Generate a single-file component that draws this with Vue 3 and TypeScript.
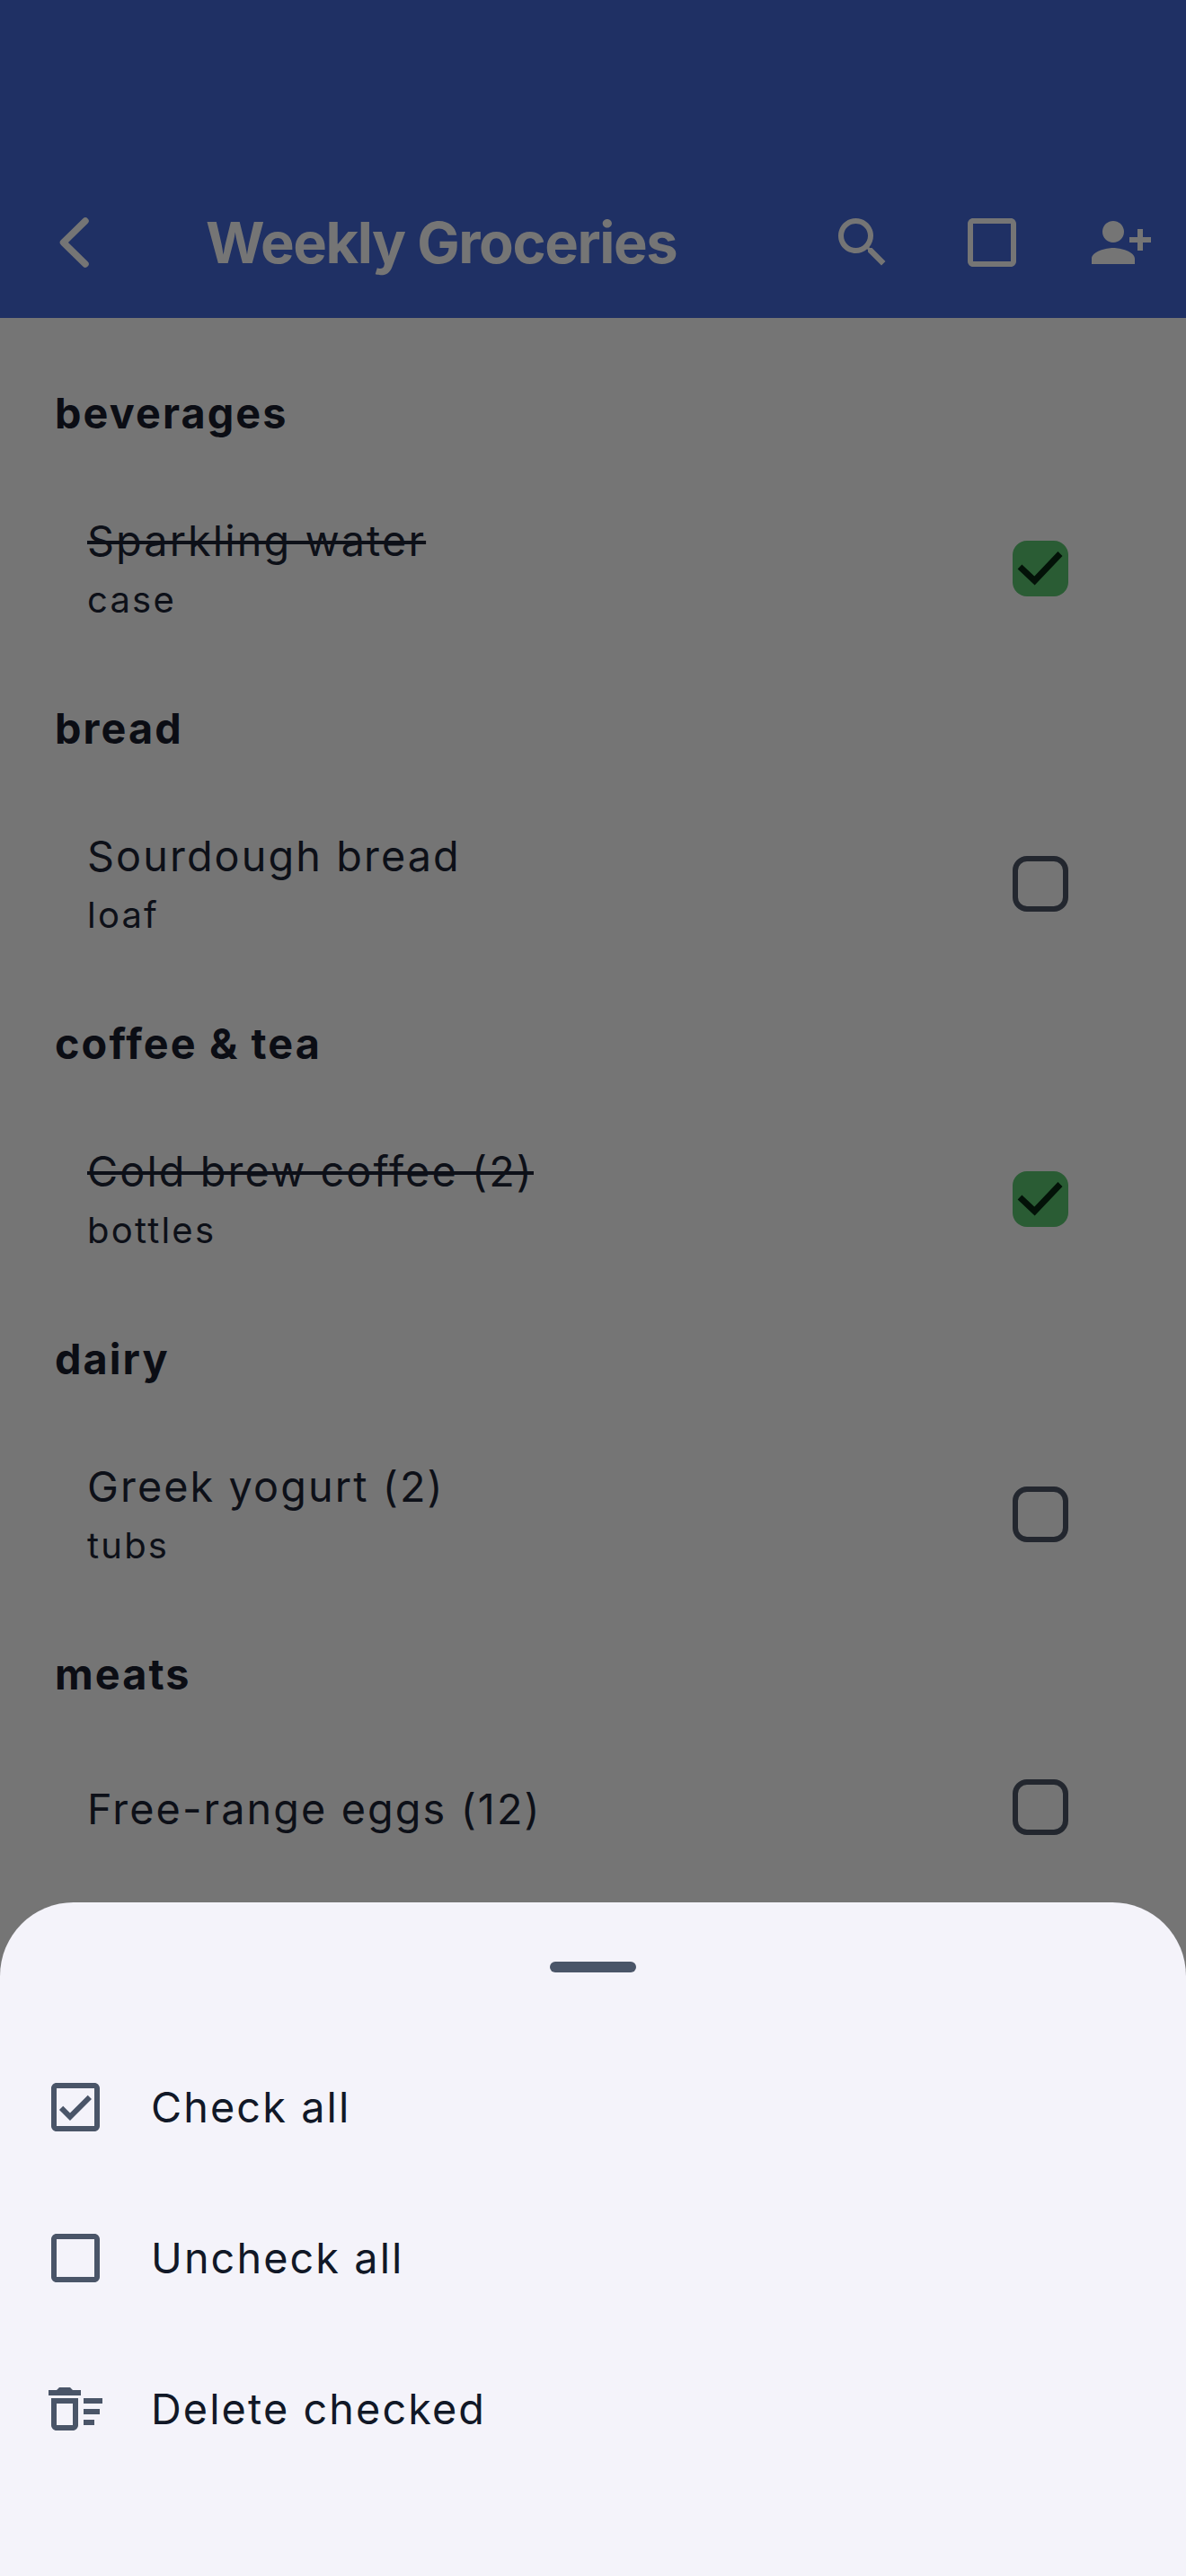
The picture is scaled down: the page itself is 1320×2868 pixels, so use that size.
<script setup lang="ts">
interface Item {
  name: string
  unit?: string
  done: boolean
}

interface Section {
  title: string
  items: Item[]
}

const sections: Section[] = [
  { title: 'beverages', items: [{ name: 'Sparkling water', unit: 'case', done: true }] },
  { title: 'bread', items: [{ name: 'Sourdough bread', unit: 'loaf', done: false }] },
  { title: 'coffee & tea', items: [{ name: 'Cold brew coffee (2)', unit: 'bottles', done: true }] },
  { title: 'dairy', items: [{ name: 'Greek yogurt (2)', unit: 'tubs', done: false }] },
  { title: 'meats', items: [{ name: 'Free-range eggs (12)', done: false }] },
]
</script>

<template>
  <div class="screen">
    <header class="topbar">
      <button class="back">
        <svg width="72" height="72" viewBox="0 0 72 72" fill="none" stroke="currentColor" stroke-width="7.500" stroke-linecap="round" stroke-linejoin="round">
          <path d="M35 12 L10.500 36 L35 60" />
        </svg>
      </button>
      <h1 class="title">Weekly Groceries</h1>
      <div class="actions">
        <svg width="72" height="72" viewBox="0 0 24 24" fill="currentColor">
          <path d="M15.5 14h-.79l-.28-.27C15.41 12.59 16 11.11 16 9.5 16 5.91 13.09 3 9.5 3S3 5.91 3 9.5 5.91 16 9.5 16c1.61 0 3.09-.59 4.23-1.57l.27.28v.79l5 4.99L20.49 19l-4.99-5zm-6 0C7.01 14 5 11.99 5 9.5S7.01 5 9.5 5 14 7.01 14 9.5 11.99 14 9.5 14z" />
        </svg>
        <svg width="72" height="72" viewBox="0 0 24 24" fill="currentColor">
          <path d="M19 5v14H5V5h14m0-2H5c-1.1 0-2 .9-2 2v14c0 1.1.9 2 2 2h14c1.1 0 2-.9 2-2V5c0-1.1-.9-2-2-2z" />
        </svg>
        <svg class="mirror" width="72" height="72" viewBox="0 0 24 24" fill="currentColor">
          <path d="M15 12c2.21 0 4-1.79 4-4s-1.79-4-4-4-4 1.79-4 4 1.79 4 4 4zm-9-2V7H4v3H1v2h3v3h2v-3h3v-2H6zm9 4c-2.67 0-8 1.34-8 4v2h16v-2c0-2.66-5.33-4-8-4z" />
        </svg>
      </div>
    </header>

    <main class="list">
      <section v-for="section in sections" :key="section.title" class="section">
        <h2 class="section-title">{{ section.title }}</h2>
        <div v-for="item in section.items" :key="item.name" class="item">
          <div class="item-text">
            <div class="item-name" :class="{ done: item.done }">{{ item.name }}</div>
            <div v-if="item.unit" class="item-unit">{{ item.unit }}</div>
          </div>
          <span class="box" :class="{ checked: item.done }">
            <svg v-if="item.done" width="62" height="62" viewBox="0 0 62 62" fill="none" stroke="#031208" stroke-width="7">
              <path d="M8 29 L24.500 44.500 L53 14.500" />
            </svg>
          </span>
        </div>
      </section>
    </main>

    <!-- bottom sheet -->
    <aside class="sheet">
      <div class="handle"></div>
      <div class="sheet-row">
        <svg width="72" height="72" viewBox="0 0 24 24" fill="currentColor">
          <path d="M19 3H5c-1.11 0-2 .9-2 2v14c0 1.1.89 2 2 2h14c1.11 0 2-.9 2-2V5c0-1.1-.89-2-2-2zm0 16H5V5h14v14zM17.990 9l-1.410-1.420-6.590 6.590-2.580-2.570-1.420 1.410 4 3.990z" />
        </svg>
        <span>Check all</span>
      </div>
      <div class="sheet-row">
        <svg width="72" height="72" viewBox="0 0 24 24" fill="currentColor">
          <path d="M19 5v14H5V5h14m0-2H5c-1.1 0-2 .9-2 2v14c0 1.1.9 2 2 2h14c1.1 0 2-.9 2-2V5c0-1.1-.9-2-2-2z" />
        </svg>
        <span>Uncheck all</span>
      </div>
      <div class="sheet-row">
        <svg width="72" height="72" viewBox="0 0 24 24" fill="currentColor">
          <path d="M15 16h4v2h-4v-2zm0-8h7v2h-7V8zm0 4h6v2h-6v-2zM3 18c0 1.1.9 2 2 2h6c1.1 0 2-.9 2-2V8H3v10zm2-8h6v8H5v-8zm5-6H6L5 5H2v2h12V5h-3z" />
        </svg>
        <span>Delete checked</span>
      </div>
    </aside>
  </div>
</template>

<style scoped>
.screen {
  position: relative;
  width: 1320px;
  height: 2868px;
  overflow: hidden;
  background: #757575;
  font-family: Inter, "Liberation Sans", sans-serif;
}

.topbar {
  height: 354px;
  box-sizing: border-box;
  padding: 0 36px 0 60px;
  display: flex;
  align-items: flex-end;
  background: #1f3064;
  color: #757575;
}

.back {
  width: 72px;
  height: 72px;
  margin-bottom: 48px;
  padding: 0;
  border: 0;
  background: none;
  color: inherit;
}

.title {
  flex: 1;
  margin: 0 0 48px 97px;
  font-size: 63.250px;
  line-height: 72px;
  font-weight: 700;
  letter-spacing: -1.440px;
  white-space: nowrap;
}

.actions {
  display: flex;
  gap: 72px;
  margin-bottom: 48px;
}

.mirror {
  transform: scaleX(-1);
}

.section {
  height: 351px;
}

.section-title {
  margin: 0;
  height: 207px;
  box-sizing: border-box;
  padding: 76px 0 0 61px;
  font-size: 46.750px;
  line-height: 60px;
  font-weight: 700;
  letter-spacing: 2.100px;
  color: #0b0d14;
}

.item {
  min-height: 94px;
  box-sizing: border-box;
  padding: 4px 131px 4px 97px;
  display: flex;
  align-items: center;
  justify-content: space-between;
}

.item-text {
  padding-top: 4px;
}

.item-name {
  font-size: 46.750px;
  font-weight: 380;
  line-height: 66px;
  letter-spacing: 2.100px;
  color: #0d1018;
}

.item-name.done {
  text-decoration: line-through;
  text-decoration-thickness: 4px;
}

.item-unit {
  font-size: 40px;
  font-weight: 380;
  line-height: 66px;
  letter-spacing: 2.200px;
  color: #0d1018;
}

.box {
  width: 62px;
  height: 62px;
  box-sizing: border-box;
  border: 6.500px solid #23272f;
  border-radius: 16px;
  flex-shrink: 0;
}

.box.checked {
  border: 0;
  background: #2a5c34;
}

.box svg {
  display: block;
}

.sheet {
  position: absolute;
  left: 0;
  right: 0;
  bottom: 0;
  height: 750px;
  box-sizing: border-box;
  padding-top: 66px;
  border-radius: 82px 82px 0 0;
  background: #f4f3fa;
}

.handle {
  width: 96px;
  height: 12px;
  margin: 0 auto 66px;
  border-radius: 6px;
  background: #4a5568;
}

.sheet-row {
  height: 168px;
  box-sizing: border-box;
  padding-left: 48px;
  display: flex;
  align-items: center;
  gap: 48px;
  color: #4a5568;
}

.sheet-row span {
  font-size: 46.750px;
  font-weight: 380;
  letter-spacing: 2.100px;
  color: #111827;
}
</style>
